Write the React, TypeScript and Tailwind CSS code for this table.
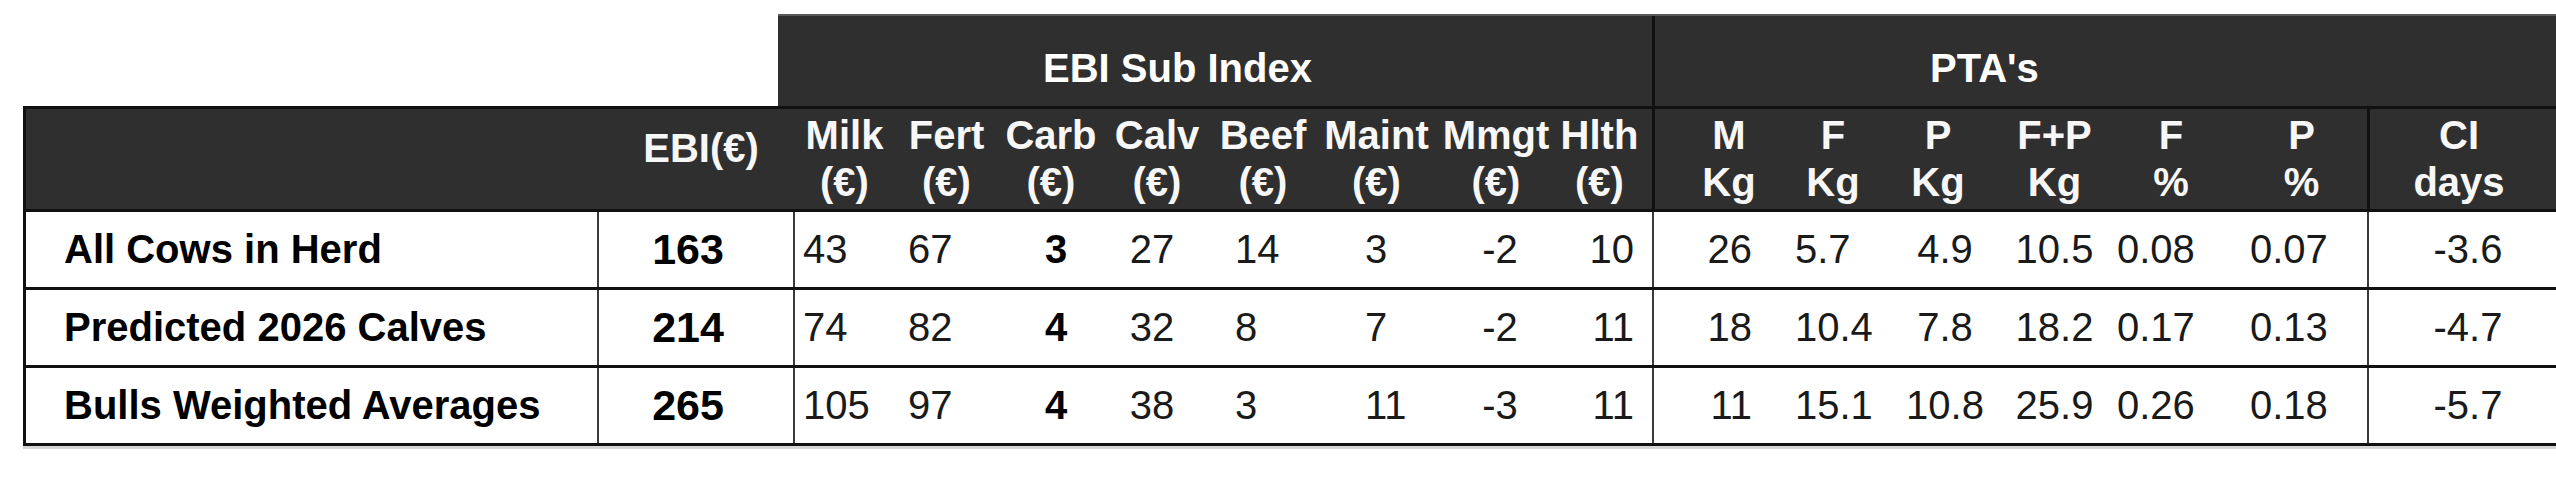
type Col = {
  top: string;
  bottom: string;
  head: string;
  cell: string;
  bold?: boolean;
  vals: string[];
};

// EBI sub index + PTA columns, left to right
const cols: Col[] = [
  { top: 'Milk', bottom: '(€)', head: '', cell: 'justify-start pl-[8px] border-l-2 border-[#3a3a3a]', vals: ['43', '74', '105'] },
  { top: 'Fert', bottom: '(€)', head: '', cell: 'justify-start pl-[12px]', vals: ['67', '82', '97'] },
  { top: 'Carb', bottom: '(€)', head: '', cell: 'justify-center pl-[10px]', bold: true, vals: ['3', '4', '4'] },
  { top: 'Calv', bottom: '(€)', head: '', cell: 'justify-center pr-[10px]', vals: ['27', '32', '38'] },
  { top: 'Beef', bottom: '(€)', head: '', cell: 'justify-start pl-[26px]', vals: ['14', '8', '3'] },
  { top: 'Maint', bottom: '(€)', head: '', cell: 'justify-start pl-[48px]', vals: ['3', '7', '11'] },
  { top: 'Mmgt', bottom: '(€)', head: '', cell: 'justify-center pl-[8px]', vals: ['-2', '-2', '-3'] },
  { top: 'Hlth', bottom: '(€)', head: 'pr-[9px]', cell: 'justify-end pr-[18px]', vals: ['10', '11', '11'] },
  { top: 'M', bottom: 'Kg', head: 'border-l-[3px] border-[#111] pl-[22px]', cell: 'justify-end pr-[29px] border-l-2 border-[#3a3a3a]', vals: ['26', '18', '11'] },
  { top: 'F', bottom: 'Kg', head: '', cell: 'justify-start pl-[14px]', vals: ['5.7', '10.4', '15.1'] },
  { top: 'P', bottom: 'Kg', head: 'pr-[5px]', cell: 'justify-center pl-[9px]', vals: ['4.9', '7.8', '10.8'] },
  { top: 'F+P', bottom: 'Kg', head: '', cell: 'justify-center', vals: ['10.5', '18.2', '25.9'] },
  { top: 'F', bottom: '%', head: 'pr-[7px]', cell: 'justify-start pl-[4px]', vals: ['0.08', '0.17', '0.26'] },
  { top: 'P', bottom: '%', head: '', cell: 'justify-start pl-[14px]', vals: ['0.07', '0.13', '0.18'] },
  { top: 'CI', bottom: 'days', head: 'border-l-[3px] border-[#111] pr-[8px]', cell: 'justify-center pl-[11px] border-l-2 border-[#3a3a3a]', vals: ['-3.6', '-4.7', '-5.7'] },
];

const rows = [
  { label: 'All Cows in Herd', ebi: '163' },
  { label: 'Predicted 2026 Calves', ebi: '214' },
  { label: 'Bulls Weighted Averages', ebi: '265' },
];

const grid =
  'grid grid-cols-[571px_196px_103px_101px_108px_104px_108px_119px_120px_96px_129px_104px_111px_117px_123px_131px_1fr]';

export default function App() {
  return (
    <div className="w-[2556px] h-[480px] overflow-hidden bg-white pt-[14px] font-['Liberation_Sans',Arial,sans-serif]">
      {/* group headings */}
      <div className="flex h-[92px]">
        <div className="w-[778px] shrink-0" />
        <div className="flex flex-1 bg-[#2f2f2f] border-t-2 border-[#5a5a5a] text-[40px] leading-[47px] font-bold text-white">
          <div className="w-[874px] shrink-0 pl-[265px] pt-[29px]">EBI Sub Index</div>
          <div className="flex-1 border-l-[3px] border-[#111] pl-[275px] pt-[29px]">PTA's</div>
        </div>
      </div>

      {/* table */}
      <div className="ml-[23px] border-[3px] border-r-0 border-[#111] shadow-[0_3px_0_#d4d4d4]">
        {/* column headings */}
        <div className={`${grid} h-[103px] bg-[#2f2f2f] border-b-[3px] border-[#111] text-[40px] leading-[47px] font-bold text-[#f7f7f7]`}>
          <div />
          <div className="flex justify-center pl-[12px] pt-[16px]">EBI(€)</div>
          {cols.map((c, i) => (
            <div key={i} className={`flex flex-col items-center justify-center whitespace-nowrap ${c.head}`}>
              <span>{c.top}</span>
              <span>{c.bottom}</span>
            </div>
          ))}
        </div>

        {/* data rows */}
        {rows.map((r, ri) => (
          <div
            key={r.label}
            className={`${grid} text-[40px] leading-[47px] text-[#1a1a1a] ${
              ri < rows.length - 1 ? 'h-[78px] border-b-[3px] border-[#111]' : 'h-[75px]'
            }`}
          >
            <div className="flex items-center pl-[38px] font-bold text-black whitespace-nowrap">{r.label}</div>
            <div className="flex items-center justify-center pr-[16px] border-l-2 border-[#3a3a3a] text-[43px] font-bold text-black">
              {r.ebi}
            </div>
            {cols.map((c, i) => (
              <div key={i} className={`flex items-center ${c.cell} ${c.bold ? 'font-bold text-black' : ''}`}>
                {c.vals[ri]}
              </div>
            ))}
          </div>
        ))}
      </div>
    </div>
  );
}
